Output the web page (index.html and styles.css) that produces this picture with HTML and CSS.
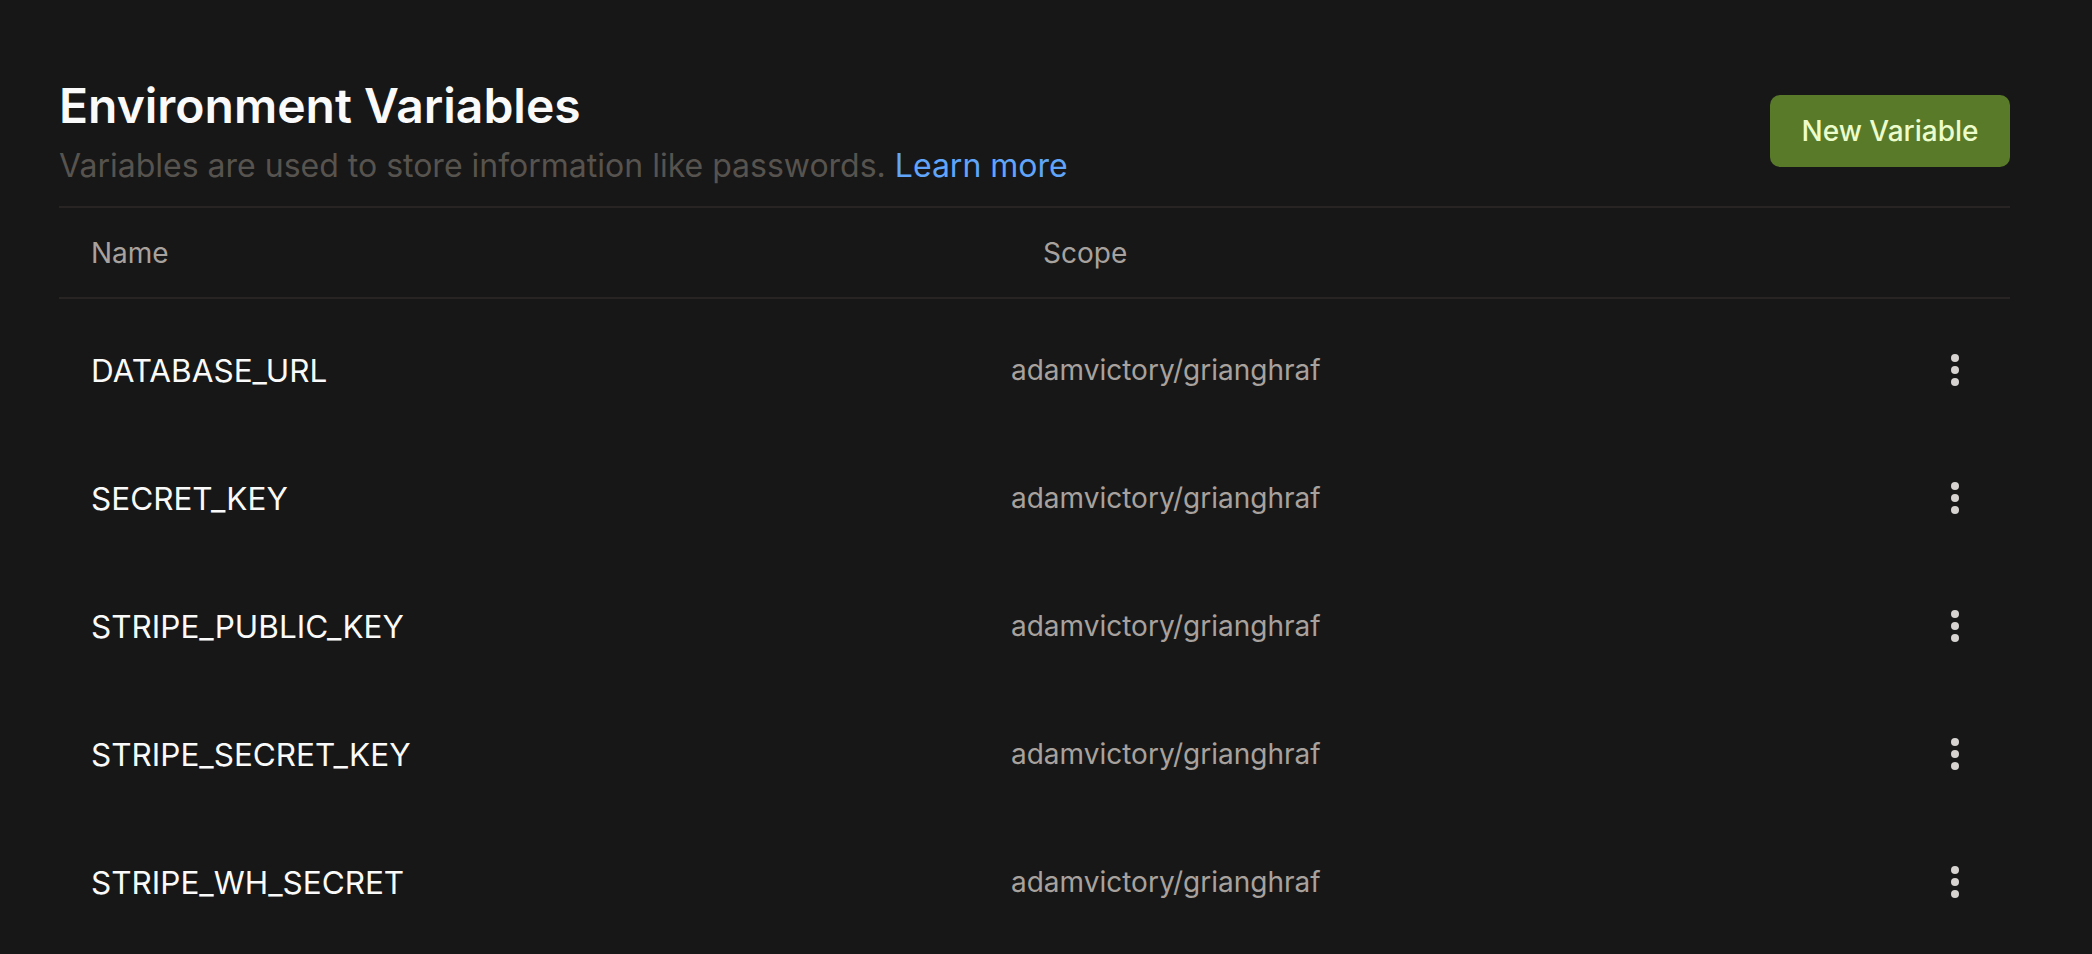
FILE: index.html
```html
<!DOCTYPE html>
<html lang="en">
<head>
<meta charset="utf-8">
<title>Environment Variables</title>
<link rel="stylesheet" href="styles.css">
</head>
<body>
<main class="page">
  <header class="page-header">
    <div class="heading">
      <h1 class="title">Environment Variables</h1>
      <p class="subtitle">Variables are used to store information like passwords. <a class="link" href="#">Learn more</a></p>
    </div>
    <button class="btn-primary" type="button">New Variable</button>
  </header>
  <div class="table">
    <div class="table-head">
      <div class="col-name">Name</div>
      <div class="col-scope">Scope</div>
    </div>
    <div class="table-body">
      <div class="row">
        <div class="cell-name">DATABASE_URL</div>
        <div class="cell-scope">adamvictory/grianghraf</div>
        <button class="kebab" type="button" aria-label="More"><span></span><span></span><span></span></button>
      </div>
      <div class="row">
        <div class="cell-name">SECRET_KEY</div>
        <div class="cell-scope">adamvictory/grianghraf</div>
        <button class="kebab" type="button" aria-label="More"><span></span><span></span><span></span></button>
      </div>
      <div class="row">
        <div class="cell-name">STRIPE_PUBLIC_KEY</div>
        <div class="cell-scope">adamvictory/grianghraf</div>
        <button class="kebab" type="button" aria-label="More"><span></span><span></span><span></span></button>
      </div>
      <div class="row">
        <div class="cell-name">STRIPE_SECRET_KEY</div>
        <div class="cell-scope">adamvictory/grianghraf</div>
        <button class="kebab" type="button" aria-label="More"><span></span><span></span><span></span></button>
      </div>
      <div class="row">
        <div class="cell-name">STRIPE_WH_SECRET</div>
        <div class="cell-scope">adamvictory/grianghraf</div>
        <button class="kebab" type="button" aria-label="More"><span></span><span></span><span></span></button>
      </div>
    </div>
  </div>
</main>
</body>
</html>
```

FILE: styles.css
```css
* { box-sizing: border-box; }
html, body {
  margin: 0;
  padding: 0;
  background: #171717;
  font-family: Inter, "Noto Sans", "Liberation Sans", sans-serif;
  color: #fafafa;
}
.page {
  padding: 74px 82px 0 59px;
}
.page-header {
  display: flex;
  align-items: center;
  justify-content: space-between;
  padding-bottom: 16px;
  border-bottom: 2px solid #282423;
}
.title {
  margin: 0;
  font-size: 48px;
  line-height: 64px;
  font-weight: 600;
  color: #fafafa;
}
.subtitle {
  margin: 4px 0 0;
  font-size: 32px;
  line-height: 48px;
  color: #57534e;
}
.link {
  color: #60a5fa;
  text-decoration: none;
}
.btn-primary {
  width: 240px;
  height: 72px;
  border: none;
  border-radius: 10px;
  background: #587a29;
  color: #ecfccb;
  font-family: inherit;
  font-size: 28px;
  font-weight: 500;
  margin-bottom: 3px;
}
.table-head {
  display: flex;
  align-items: center;
  height: 91px;
  border-bottom: 2px solid #282423;
  font-size: 28px;
  color: #a8a29e;
}
.col-name { padding-left: 32px; width: 984px; }
.table-body { padding-top: 7px; }
.row {
  display: flex;
  align-items: center;
  height: 128px;
}
.cell-name {
  padding-left: 32px;
  width: 952px;
  font-size: 31.5px;
  color: #fafafa;
}
.cell-scope {
  flex: 1;
  font-size: 28px;
  color: #a8a29e;
}
.kebab {
  display: flex;
  flex-direction: column;
  align-items: center;
  gap: 4px;
  width: 40px;
  padding: 0;
  margin-right: 35px;
  background: none;
  border: none;
}
.kebab span {
  width: 8px;
  height: 8px;
  border-radius: 50%;
  background: #d6d3d1;
}
```
